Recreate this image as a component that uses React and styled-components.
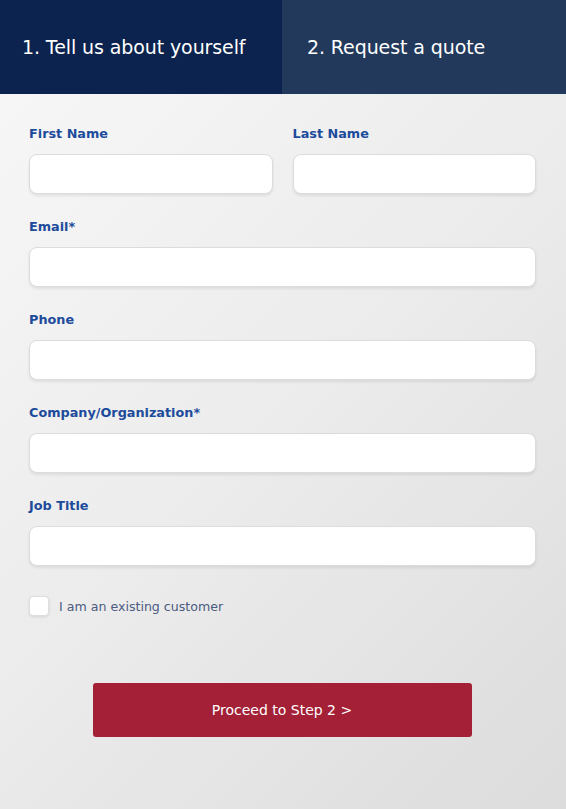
import React from "react";
import styled, { createGlobalStyle } from "styled-components";

const Global = createGlobalStyle`
    html, body {
        margin: 0;
        padding: 0;
    }
    body {
        font-family: "DejaVu Sans", "Liberation Sans", sans-serif;
        background: #e6e6e6;
    }
`;

const Page = styled.div`
    width: 566px;
    min-height: 809px;
    background: linear-gradient(135deg, #f8f8f8 0%, #ececec 50%, #dcdcdc 100%);
`;

const Tabs = styled.div`
    display: flex;
    height: 94px;
`;

const Tab = styled.div`
    flex: 0 0 ${(p) => (p.active ? "282px" : "284px")};
    display: flex;
    align-items: center;
    padding-left: ${(p) => (p.active ? "22px" : "25px")};
    box-sizing: border-box;
    background: ${(p) => (p.active ? "#0b234e" : "#22395c")};
    color: #ffffff;
    font-size: 19px;
    font-weight: 400;
    letter-spacing: -0.1px;
`;

const Form = styled.form`
    padding: 30px 30px 72px 29px;
    display: flex;
    flex-direction: column;
`;

const Row = styled.div`
    display: grid;
    grid-template-columns: 1fr 1fr;
    column-gap: 20px;
`;

const Field = styled.div`
    display: flex;
    flex-direction: column;
    margin-bottom: 23px;
`;

const Label = styled.label`
    font-size: 12.8px;
    line-height: 20px;
    font-weight: bold;
    color: #1d4b9b;
    margin-bottom: 10px;
`;

const Input = styled.input`
    height: 40px;
    box-sizing: border-box;
    border: 1px solid #dcdcdc;
    border-radius: 8px;
    background: #ffffff;
    box-shadow: 0 2px 3px rgba(0, 0, 0, 0.08);
    outline: none;
    padding: 0 12px;
    font-family: inherit;
`;

const CheckRow = styled.label`
    display: flex;
    align-items: center;
    gap: 10px;
    margin-top: 7px;
    font-size: 12.6px;
    color: #4b5b82;
`;

const Box = styled.span`
    width: 20px;
    height: 20px;
    box-sizing: border-box;
    background: #ffffff;
    border: 1px solid #dedede;
    border-radius: 4px;
    box-shadow: 0 1px 3px rgba(0, 0, 0, 0.1);
`;

const Button = styled.button`
    align-self: center;
    margin: 67px 0 0 -1px;
    width: 379px;
    height: 54px;
    border: none;
    border-radius: 3px;
    background: #a32036;
    color: #ffffff;
    font-family: inherit;
    font-size: 14px;
    font-weight: 400;
`;

const fields = [
    { id: "email", label: "Email*" },
    { id: "phone", label: "Phone" },
    { id: "company", label: "Company/Organization*" },
    { id: "job", label: "Job Title" },
];

export default function App() {
    return (
        <>
            <Global />
            <Page>
                <Tabs>
                    <Tab active>1. Tell us about yourself</Tab>
                    <Tab>2. Request a quote</Tab>
                </Tabs>
                <Form onSubmit={(e) => e.preventDefault()}>
                    <Row>
                        <Field>
                            <Label htmlFor="first">First Name</Label>
                            <Input id="first" />
                        </Field>
                        <Field>
                            <Label htmlFor="last">Last Name</Label>
                            <Input id="last" />
                        </Field>
                    </Row>
                    {fields.map((f) => (
                        <Field key={f.id}>
                            <Label htmlFor={f.id}>{f.label}</Label>
                            <Input id={f.id} />
                        </Field>
                    ))}
                    <CheckRow>
                        <Box />
                        I am an existing customer
                    </CheckRow>
                    <Button type="submit">Proceed to Step 2 &gt;</Button>
                </Form>
            </Page>
        </>
    );
}
